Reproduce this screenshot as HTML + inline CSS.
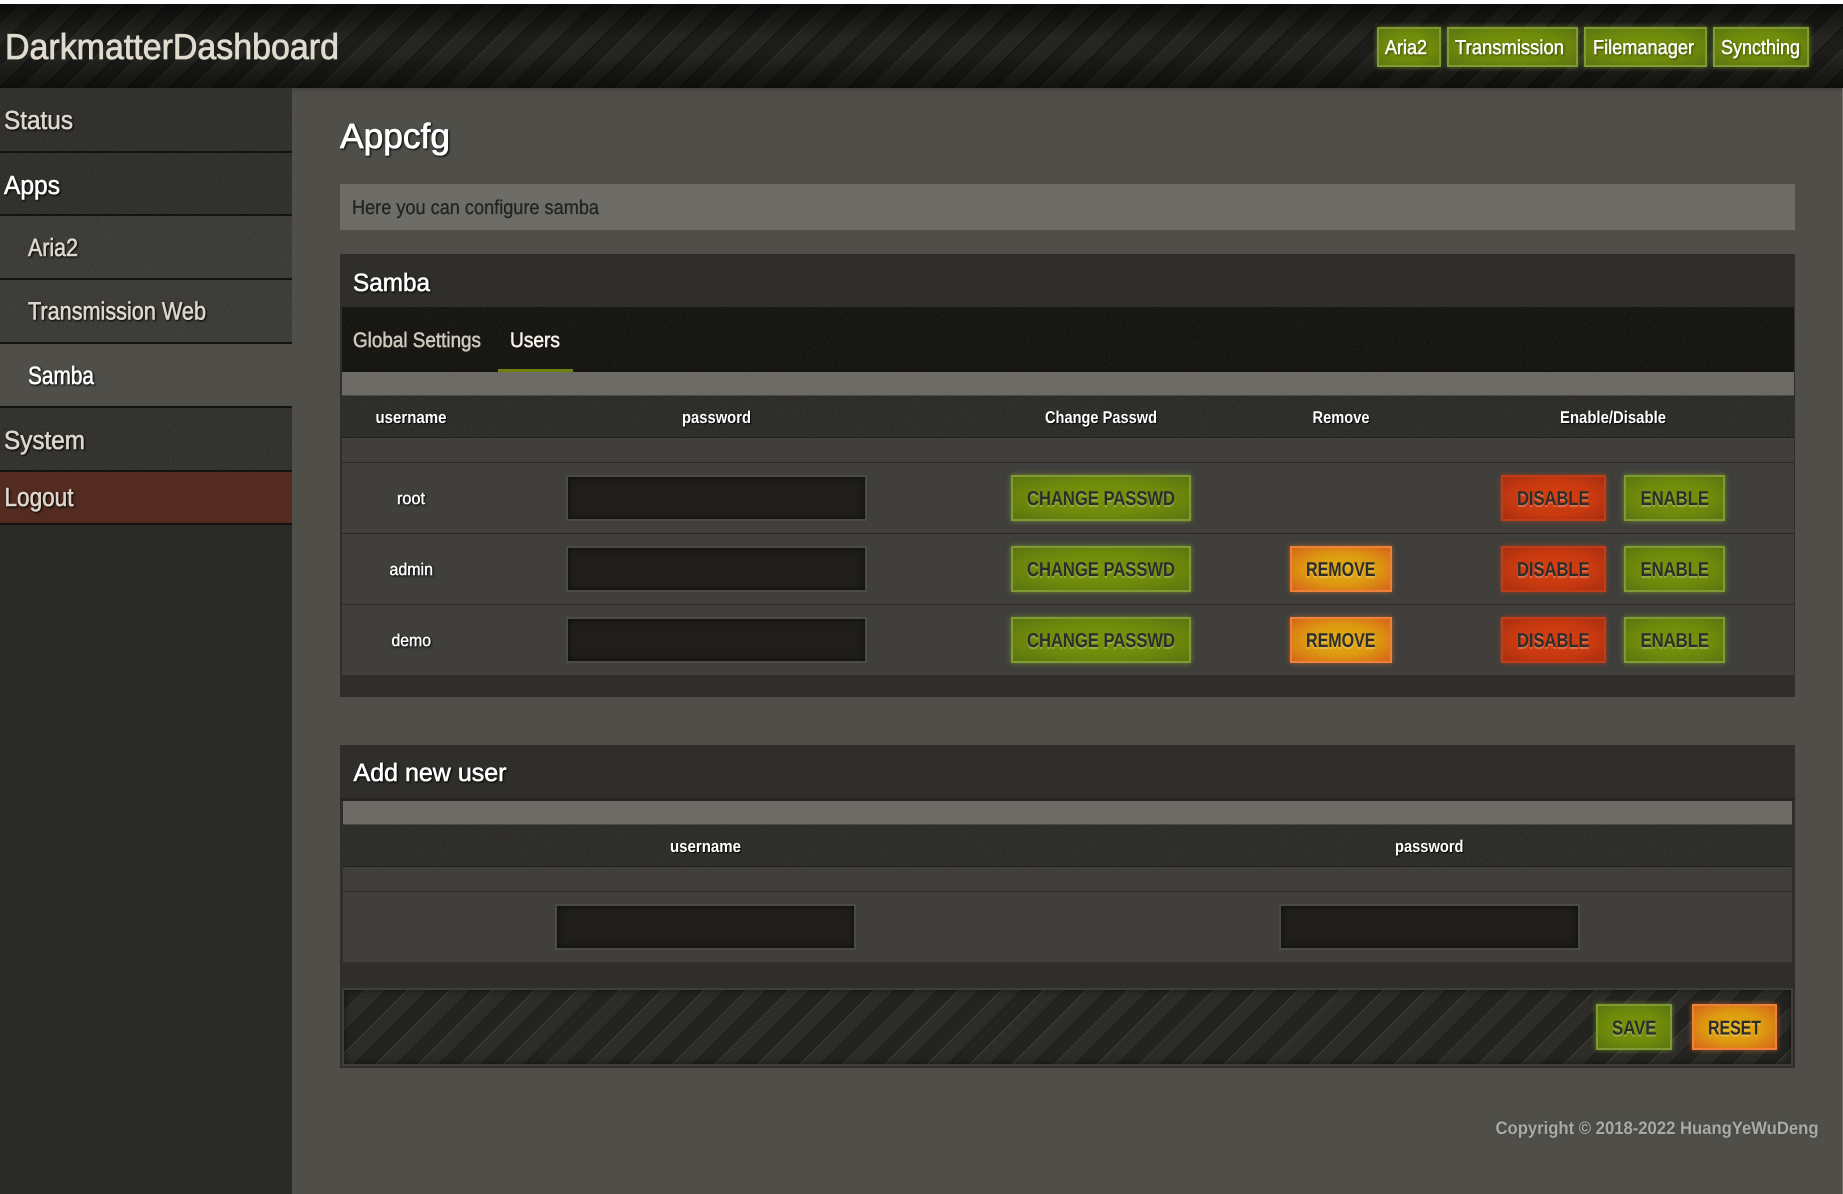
<!DOCTYPE html>
<html lang="en">
<head>
<meta charset="utf-8">
<title>DarkmatterDashboard</title>
<style>
html,body{margin:0;padding:0;background:#fff;}
body{width:1843px;height:1194px;overflow:hidden;position:relative;font-family:"Liberation Sans",sans-serif;}
.b{position:absolute;box-sizing:border-box;}
.hatch{background:repeating-linear-gradient(135deg,#232320 0 14.5px,#3d3c37 14.5px 15.5px,#2d2c28 15.5px 29px,#1e1e1b 29px 30px);}
.in{position:absolute;box-sizing:border-box;background:#1f1e1a;border:2px solid #4b4a45;box-shadow:inset 0 0 7px #0c0c0a;}
.g,.o,.r{position:absolute;box-sizing:border-box;border:2px solid;}
.g{background:radial-gradient(ellipse at center,#78950a 0,#6f8a0b 55%,#5c7411 100%);border-color:#7f9b33;box-shadow:0 0 5px rgba(150,185,50,.6);}
.o{background:radial-gradient(ellipse at center,#e2ae0c 0,#dd9a10 50%,#d6651a 100%);border-color:#f0813a;box-shadow:0 0 5px rgba(240,130,50,.55);}
.r{background:radial-gradient(ellipse at center,#d43e0f 0,#c93a10 55%,#a82e10 100%);border-color:#c23c17;box-shadow:0 0 5px rgba(220,70,20,.55);}
svg#t{position:absolute;left:0;top:0;width:1843px;height:1194px;}
svg#t text{font-family:"Liberation Sans",sans-serif;text-rendering:geometricPrecision;}
.nav{font-size:26px;fill:#dcd8cd;stroke:#dcd8cd;stroke-width:.6px;filter:drop-shadow(1px 1px 1px #000);}
.w{fill:#fff;stroke:#fff;}
.sub{font-size:25px;}
.h{font-size:25px;fill:#fff;stroke:#fff;stroke-width:.6px;filter:drop-shadow(1px 1px 1px #000);}
.th{font-size:17px;font-weight:bold;fill:#fff;text-shadow:1px 1px 1px #000;}
.td{font-size:17px;fill:#fff;stroke:#fff;stroke-width:.4px;filter:drop-shadow(1px 1px 1px #000);}
.btn{font-size:20px;font-weight:bold;fill:#2d2d2c;text-shadow:0 2px 1px rgba(255,255,255,.28);}
.top{font-size:20px;fill:#fbfbf4;stroke:#fbfbf4;stroke-width:.55px;filter:drop-shadow(1px 1px 1px rgba(0,0,0,.5));}
</style>
</head>
<body>
<!-- header -->
<div class="b" style="left:0;top:4px;width:1843px;height:84px;background:repeating-linear-gradient(135deg,#1e1e1b 0 14.5px,#33332e 14.5px 15.5px,#282824 15.5px 29px,#141412 29px 30px);"></div>
<div class="b" style="left:0;top:4px;width:1843px;height:84px;background:linear-gradient(180deg,rgba(0,0,0,.62) 0,rgba(0,0,0,.08) 40%,rgba(0,0,0,.08) 60%,rgba(0,0,0,.55) 100%);"></div>
<!-- main -->
<div class="b" style="left:292px;top:88px;width:1551px;height:1106px;background:#4f4e49;"></div>
<div class="b" style="left:292px;top:88px;width:1551px;height:5px;background:linear-gradient(180deg,rgba(0,0,0,.14),rgba(0,0,0,0));"></div>
<div class="b" style="left:1842px;top:88px;width:1px;height:1106px;background:#74736e;"></div>
<!-- sidebar -->
<div class="b" style="left:0;top:88px;width:292px;height:1106px;background:#2a2a27;"></div>
<div class="b" style="left:0;top:88px;width:292px;height:63px;background:#302f2c;"></div>
<div class="b" style="left:0;top:151px;width:292px;height:2px;background:#131311;"></div>
<div class="b" style="left:0;top:153px;width:292px;height:61px;background:#302f2c;"></div>
<div class="b" style="left:0;top:214px;width:292px;height:2px;background:#131311;"></div>
<div class="b" style="left:0;top:216px;width:292px;height:62px;background:#3c3b37;"></div>
<div class="b" style="left:0;top:278px;width:292px;height:2px;background:#131311;"></div>
<div class="b" style="left:0;top:280px;width:292px;height:62px;background:#3c3b37;"></div>
<div class="b" style="left:0;top:342px;width:292px;height:2px;background:#131311;"></div>
<div class="b" style="left:0;top:344px;width:292px;height:62px;background:#4f4e49;"></div>
<div class="b" style="left:0;top:406px;width:292px;height:2px;background:#131311;"></div>
<div class="b" style="left:0;top:408px;width:292px;height:62px;background:#32312e;"></div>
<div class="b" style="left:0;top:470px;width:292px;height:2px;background:#131311;"></div>
<div class="b" style="left:0;top:472px;width:292px;height:51px;background:#532b20;"></div>
<div class="b" style="left:0;top:523px;width:292px;height:2px;background:#131311;"></div>
<!-- info -->
<div class="b" style="left:340px;top:184px;width:1455px;height:46px;background:#6d6c67;"></div>
<!-- samba panel -->
<div class="b" style="left:340px;top:254px;width:1455px;height:443px;background:#2f2e2a;"></div>
<div class="b" style="left:342px;top:307px;width:1452px;height:65px;background:#161511;"></div>
<div class="b" style="left:498px;top:369px;width:75px;height:3px;background:#6f7f10;"></div>
<div class="b" style="left:342px;top:372px;width:1452px;height:24px;background:#6c6b66;border-bottom:1px solid #4a4945;"></div>
<div class="b" style="left:342px;top:396px;width:1452px;height:42px;background:#2d2c28;border-bottom:1px solid #22211e;"></div>
<div class="b" style="left:342px;top:438px;width:1452px;height:237px;background:#403f3b;"></div>
<div class="b" style="left:342px;top:462px;width:1452px;height:1px;background:#282724;"></div>
<div class="b" style="left:342px;top:533px;width:1452px;height:1px;background:#282724;"></div>
<div class="b" style="left:342px;top:604px;width:1452px;height:1px;background:#282724;"></div>
<!-- inputs -->
<div class="in" style="left:566px;top:475px;width:301px;height:46px;"></div>
<div class="in" style="left:566px;top:546px;width:301px;height:46px;"></div>
<div class="in" style="left:566px;top:617px;width:301px;height:46px;"></div>
<!-- row buttons -->
<div class="g" style="left:1011px;top:475px;width:180px;height:46px;"></div>
<div class="g" style="left:1011px;top:546px;width:180px;height:46px;"></div>
<div class="g" style="left:1011px;top:617px;width:180px;height:46px;"></div>
<div class="o" style="left:1290px;top:546px;width:102px;height:46px;"></div>
<div class="o" style="left:1290px;top:617px;width:102px;height:46px;"></div>
<div class="r" style="left:1501px;top:475px;width:105px;height:46px;"></div>
<div class="r" style="left:1501px;top:546px;width:105px;height:46px;"></div>
<div class="r" style="left:1501px;top:617px;width:105px;height:46px;"></div>
<div class="g" style="left:1624px;top:475px;width:101px;height:46px;"></div>
<div class="g" style="left:1624px;top:546px;width:101px;height:46px;"></div>
<div class="g" style="left:1624px;top:617px;width:101px;height:46px;"></div>
<!-- add user panel -->
<div class="b" style="left:340px;top:745px;width:1455px;height:323px;background:#2f2e2a;"></div>
<div class="b" style="left:340px;top:798px;width:1455px;height:3px;background:#262521;"></div>
<div class="b" style="left:343px;top:801px;width:1449px;height:24px;background:#6c6b66;border-bottom:1px solid #4a4945;"></div>
<div class="b" style="left:343px;top:825px;width:1449px;height:42px;background:#2d2c28;border-bottom:1px solid #22211e;"></div>
<div class="b" style="left:343px;top:867px;width:1449px;height:95px;background:#403f3b;"></div>
<div class="b" style="left:343px;top:891px;width:1449px;height:1px;background:#282724;"></div>
<div class="in" style="left:555px;top:904px;width:301px;height:46px;"></div>
<div class="in" style="left:1279px;top:904px;width:301px;height:46px;"></div>
<div class="b hatch" style="left:342px;top:988px;width:1451px;height:78px;border:2px solid #3e3d39;box-shadow:inset 0 0 8px rgba(0,0,0,.5);"></div>
<div class="g" style="left:1596px;top:1004px;width:76px;height:46px;"></div>
<div class="o" style="left:1692px;top:1004px;width:85px;height:46px;"></div>
<!-- header buttons -->
<div class="g" style="left:1377px;top:27px;width:64px;height:40px;"></div>
<div class="g" style="left:1447px;top:27px;width:131px;height:40px;"></div>
<div class="g" style="left:1584px;top:27px;width:123px;height:40px;"></div>
<div class="g" style="left:1713px;top:27px;width:96px;height:40px;"></div>

<svg id="t" xmlns="http://www.w3.org/2000/svg" viewBox="0 0 1843 1194">
<defs>
<filter id="n" x="0" y="0" width="100%" height="100%">
<feTurbulence type="fractalNoise" baseFrequency="0.7" numOctaves="2" seed="4"/>
<feColorMatrix type="matrix" values="0 0 0 0 1  0 0 0 0 1  0 0 0 0 0.9  0 0 0 1.4 -0.62"/>
<feComposite operator="in" in2="SourceGraphic"/>
</filter>
</defs>
<g filter="url(#n)" opacity=".1">
<rect x="0" y="88" width="292" height="63"/>
<rect x="0" y="153" width="292" height="61"/>
<rect x="0" y="216" width="292" height="62"/>
<rect x="0" y="280" width="292" height="62"/>
<rect x="0" y="408" width="292" height="62"/>
<rect x="342" y="307" width="1452" height="62"/>
<rect x="342" y="396" width="1452" height="41"/>
<rect x="343" y="825" width="1449" height="41"/>
</g>

<text x="5" y="59" textLength="334" lengthAdjust="spacingAndGlyphs" style="font-size:36px;fill:#dfdbcf;stroke:#dfdbcf;stroke-width:.8px;">DarkmatterDashboard</text>
<text class="top" x="1385" y="54" textLength="42" lengthAdjust="spacingAndGlyphs">Aria2</text>
<text class="top" x="1455" y="54" textLength="109" lengthAdjust="spacingAndGlyphs">Transmission</text>
<text class="top" x="1593" y="54" textLength="101" lengthAdjust="spacingAndGlyphs">Filemanager</text>
<text class="top" x="1721" y="54" textLength="79" lengthAdjust="spacingAndGlyphs">Syncthing</text>

<text class="nav" x="4" y="129" textLength="69" lengthAdjust="spacingAndGlyphs">Status</text>
<text class="nav w" x="4" y="194" textLength="56" lengthAdjust="spacingAndGlyphs">Apps</text>
<text class="nav sub" x="28" y="256" textLength="50" lengthAdjust="spacingAndGlyphs">Aria2</text>
<text class="nav sub" x="28" y="319.5" textLength="178" lengthAdjust="spacingAndGlyphs">Transmission Web</text>
<text class="nav sub w" x="28" y="384" textLength="66" lengthAdjust="spacingAndGlyphs">Samba</text>
<text class="nav" x="4" y="449" textLength="81" lengthAdjust="spacingAndGlyphs">System</text>
<text class="nav" x="4.5" y="506" textLength="69" lengthAdjust="spacingAndGlyphs">Logout</text>

<text x="340" y="148" textLength="110" lengthAdjust="spacingAndGlyphs" style="font-size:35px;fill:#fff;stroke:#fff;stroke-width:.8px;filter:drop-shadow(1px 1px 1px #000);">Appcfg</text>
<text x="352" y="214" textLength="247" lengthAdjust="spacingAndGlyphs" style="font-size:20px;fill:#232320;stroke:#232320;stroke-width:.3px;">Here you can configure samba</text>

<text class="h" x="353" y="291" textLength="77" lengthAdjust="spacingAndGlyphs">Samba</text>
<text x="353" y="347" textLength="128" lengthAdjust="spacingAndGlyphs" style="font-size:21px;fill:#cfcbbf;stroke:#cfcbbf;stroke-width:.5px;">Global Settings</text>
<text x="510" y="347" textLength="50" lengthAdjust="spacingAndGlyphs" style="font-size:21px;fill:#f6f4ec;stroke:#f6f4ec;stroke-width:.5px;">Users</text>

<text class="th" x="375.5" y="423" textLength="71" lengthAdjust="spacingAndGlyphs">username</text>
<text class="th" x="682" y="423" textLength="69" lengthAdjust="spacingAndGlyphs">password</text>
<text class="th" x="1045" y="423" textLength="112" lengthAdjust="spacingAndGlyphs">Change Passwd</text>
<text class="th" x="1312.5" y="423" textLength="57" lengthAdjust="spacingAndGlyphs">Remove</text>
<text class="th" x="1560" y="423" textLength="106" lengthAdjust="spacingAndGlyphs">Enable/Disable</text>

<text class="td" x="397" y="504" textLength="28" lengthAdjust="spacingAndGlyphs">root</text>
<text class="td" x="389.5" y="575" textLength="43.5" lengthAdjust="spacingAndGlyphs">admin</text>
<text class="td" x="391.5" y="646" textLength="39.5" lengthAdjust="spacingAndGlyphs">demo</text>

<text class="btn" x="1027" y="505" textLength="148" lengthAdjust="spacingAndGlyphs">CHANGE PASSWD</text>
<text class="btn" x="1027" y="576" textLength="148" lengthAdjust="spacingAndGlyphs">CHANGE PASSWD</text>
<text class="btn" x="1027" y="647" textLength="148" lengthAdjust="spacingAndGlyphs">CHANGE PASSWD</text>
<text class="btn" x="1306" y="576" textLength="69.5" lengthAdjust="spacingAndGlyphs">REMOVE</text>
<text class="btn" x="1306" y="647" textLength="69.5" lengthAdjust="spacingAndGlyphs">REMOVE</text>
<text class="btn" x="1517" y="505" textLength="72.5" lengthAdjust="spacingAndGlyphs">DISABLE</text>
<text class="btn" x="1517" y="576" textLength="72.5" lengthAdjust="spacingAndGlyphs">DISABLE</text>
<text class="btn" x="1517" y="647" textLength="72.5" lengthAdjust="spacingAndGlyphs">DISABLE</text>
<text class="btn" x="1640.5" y="505" textLength="68.5" lengthAdjust="spacingAndGlyphs">ENABLE</text>
<text class="btn" x="1640.5" y="576" textLength="68.5" lengthAdjust="spacingAndGlyphs">ENABLE</text>
<text class="btn" x="1640.5" y="647" textLength="68.5" lengthAdjust="spacingAndGlyphs">ENABLE</text>

<text class="h" x="353.5" y="781" textLength="153" lengthAdjust="spacingAndGlyphs">Add new user</text>
<text class="th" x="670" y="852" textLength="71" lengthAdjust="spacingAndGlyphs">username</text>
<text class="th" x="1395" y="852" textLength="68.5" lengthAdjust="spacingAndGlyphs">password</text>
<text class="btn" x="1612" y="1034.5" textLength="44.5" lengthAdjust="spacingAndGlyphs">SAVE</text>
<text class="btn" x="1708" y="1034.5" textLength="53" lengthAdjust="spacingAndGlyphs">RESET</text>

<text x="1495.5" y="1134" textLength="323" lengthAdjust="spacingAndGlyphs" style="font-size:18px;font-weight:bold;fill:#a9a9a6;text-shadow:0 0 2px rgba(0,0,0,.2);">Copyright © 2018-2022 HuangYeWuDeng</text>
</svg>
</body>
</html>
